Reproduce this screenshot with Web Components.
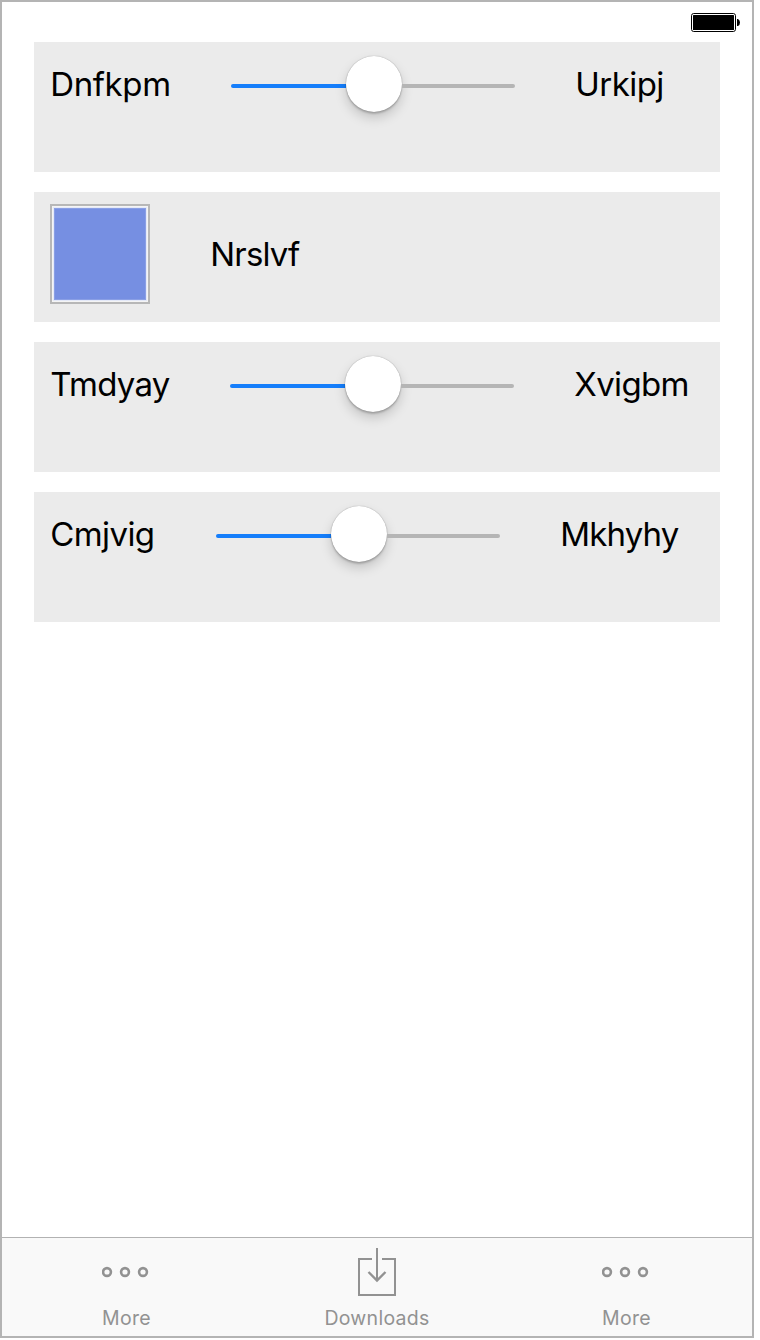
<!DOCTYPE html>
<html lang="en">
<head>
<meta charset="utf-8">
<title>Settings</title>
<style>
html,body{margin:0;background:#fff}
body{font-family:Inter,"Liberation Sans",sans-serif;color:#000}
</style>
</head>
<body>
<phone-screen>
  <battery-status slot="status"></battery-status>
  <option-card>
    <text-label style="width:121px;letter-spacing:-.4px">Dnfkpm</text-label>
    <value-slider></value-slider>
    <text-label style="letter-spacing:-.55px">Urkipj</text-label>
  </option-card>
  <option-card>
    <color-swatch></color-swatch>
    <text-label style="height:99px;letter-spacing:-.85px">Nrslvf</text-label>
  </option-card>
  <option-card>
    <text-label style="width:120px;letter-spacing:-.75px">Tmdyay</text-label>
    <value-slider></value-slider>
    <text-label style="letter-spacing:-.65px">Xvigbm</text-label>
  </option-card>
  <option-card>
    <text-label style="width:106px;letter-spacing:-.6px">Cmjvig</text-label>
    <value-slider></value-slider>
    <text-label style="letter-spacing:-.85px">Mkhyhy</text-label>
  </option-card>
  <tab-item slot="tabs" icon="more">More</tab-item>
  <tab-item slot="tabs" icon="download">Downloads</tab-item>
  <tab-item slot="tabs" icon="more">More</tab-item>
</phone-screen>
<script>
function define(name, markup, setup) {
  customElements.define(name, class extends HTMLElement {
    constructor() {
      super();
      this.attachShadow({ mode: 'open' }).innerHTML = markup;
    }
    connectedCallback() { if (setup) setup(this); }
  });
}

define('phone-screen', `
<style>
:host{display:flex;flex-direction:column;box-sizing:border-box;width:754px;height:1338px;border:2px solid #b4b4b4;background:#fff}
header{height:40px;flex:none;display:flex;justify-content:flex-end;box-sizing:border-box;padding:11px 12px 0 0}
main{flex:1;display:flex;flex-direction:column;gap:20px;padding:0 32px}
nav{height:99px;flex:none;box-sizing:border-box;border-top:1px solid #b2b2b2;background:#f9f9f9;display:grid;grid-template-columns:repeat(3,1fr)}
</style>
<header><slot name="status"></slot></header>
<main><slot></slot></main>
<nav><slot name="tabs"></slot></nav>`);

define('battery-status', `
<style>:host{display:block;width:49px;height:19px}svg{display:block}</style>
<svg width="49" height="19" viewBox="0 0 49 19">
<rect x=".5" y=".5" width="44" height="18" rx="2.2" fill="#fff" stroke="#000"/>
<rect x="2" y="2" width="41" height="15" rx=".6"/>
<path d="M46 6h1q2 1 2 3.5t-2 3.5h-1z"/>
</svg>`);

define('option-card', `
<style>:host{display:flex;align-items:flex-start;gap:60px;box-sizing:border-box;width:686px;height:130px;padding:12px 16px;background:#ebebeb}</style>
<slot></slot>`);

define('text-label', `
<style>:host{display:flex;align-items:center;box-sizing:border-box;height:59px;padding-left:.3px;font-size:33px;font-weight:380;line-height:40px;white-space:nowrap}</style>
<slot></slot>`);

define('color-swatch', `
<style>
:host{display:block;box-sizing:border-box;width:100px;height:100px;border:2px solid #b7b7b7;padding:1px;background:#f4f4f4}
div{box-sizing:border-box;height:94px;border:1px solid #e4e9f8;background:#768fe2;background-clip:padding-box;box-shadow:inset 0 0 0 1px #8a9fe5}
</style><div></div>`);

define('value-slider', `
<style>
:host{display:flex;align-items:center;width:284px;height:60px;flex:none}
.fill,.rest{height:4px;margin-top:4px}
.fill{width:115px;background:#157efb;border-radius:2px 0 0 2px}
.rest{width:113px;background:#b5b5b5;border-radius:0 2px 2px 0}
.thumb{width:56px;height:56px;border-radius:50%;background:#fff;box-shadow:0 0 1px rgba(0,0,0,.4),0 2px 2px rgba(0,0,0,.18),0 6px 12px rgba(0,0,0,.17)}
</style>
<div class="fill"></div><div class="thumb"></div><div class="rest"></div>`);

const icons = {
  more: `<g stroke-width="2.6"><circle cx="5" cy="24" r="3.9"/><circle cx="23" cy="24" r="3.9"/><circle cx="41" cy="24" r="3.9"/></g>`,
  download: `<path stroke-width="2" d="M20 11H7v36h36V11H30M25 0v32"/><path stroke-width="2.4" d="M16.5 24l8.5 8.5 8.5-8.5"/>`
};
define('tab-item', `
<style>
:host{display:flex;flex-direction:column;align-items:center;padding-top:10px;color:#929292;font-size:19.5px;line-height:24px;letter-spacing:.28px}
svg{display:block;flex:none;fill:none;stroke:currentColor}
span{margin-top:10px}
:host([icon=more]) span{position:relative;left:-.5px}
</style>
<svg width="50" height="48" viewBox="0 0 50 48"></svg><span><slot></slot></span>`,
  el => { el.shadowRoot.querySelector('svg').innerHTML = icons[el.getAttribute('icon')]; });
</script>
</body>
</html>
